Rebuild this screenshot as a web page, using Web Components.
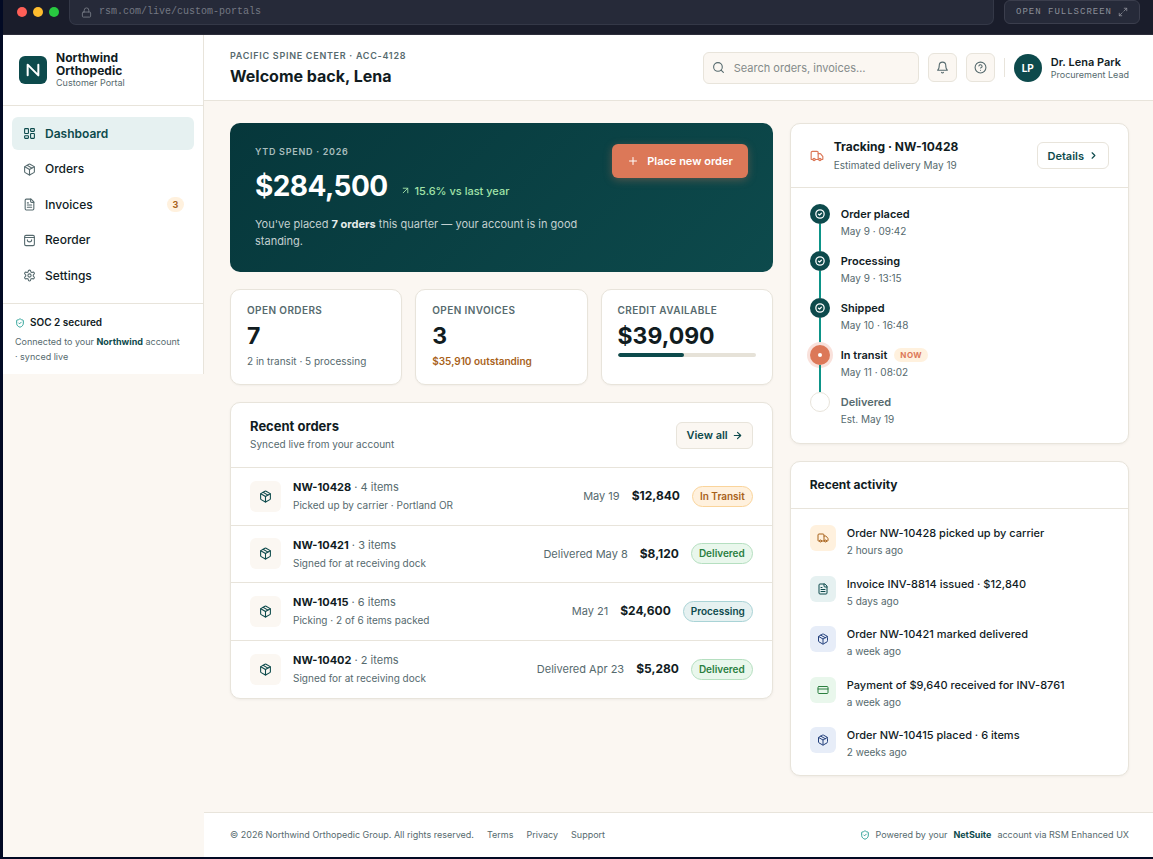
<!DOCTYPE html>
<html lang="en">
<head>
<meta charset="utf-8">
<meta name="viewport" content="width=device-width, initial-scale=1">
<title>Northwind Orthopedic – Customer Portal</title>
<style>
  :root {
    --navy: #020a24; --cream: #fbf7f2; --line: #e8e4db; --ink: #111c1f; --muted: #566a6e;
    --teal: #0d4a4c; --teal-bright: #0d9488; --mint: #e6f1f1; --coral: #dc7858;
    --amber: #a8621b; --amber-bg: #fff1de; --green: #2b7f3f; --green-bg: #e9f7ec;
    --blue: #23407c; --blue-bg: #e7edf8;
  }
  body { margin: 0; background: var(--navy); color: var(--ink); font: 11px/16px Inter, "Liberation Sans", sans-serif; }
</style>
</head>
<body>
<portal-window>
  <browser-bar slot="bar"></browser-bar>
  <side-bar slot="side">
    <nav-item icon="dashboard" active>Dashboard</nav-item>
    <nav-item icon="package">Orders</nav-item>
    <nav-item icon="file" count="3">Invoices</nav-item>
    <nav-item icon="bag">Reorder</nav-item>
    <nav-item icon="gear">Settings</nav-item>
  </side-bar>
  <top-bar slot="top"></top-bar>
  <dashboard-grid>
    <spend-hero slot="left"></spend-hero>
    <stat-row slot="left">
      <stat-card label="Open orders" value="7">2 in transit · 5 processing</stat-card>
      <stat-card label="Open invoices" value="3" warn>$35,910 outstanding</stat-card>
      <stat-card label="Credit available" value="$39,090"><usage-bar value="48"></usage-bar></stat-card>
    </stat-row>
    <panel-card slot="left" heading="Recent orders" sub="Synced live from your account" large>
      <pill-button slot="action" tinted icon="arrow">View all</pill-button>
      <order-list>
        <order-row number="NW-10428" items="4 items" date="May 19" amount="$12,840" status="In Transit" tone="amber">Picked up by carrier · Portland OR</order-row>
        <order-row number="NW-10421" items="3 items" date="Delivered May 8" amount="$8,120" status="Delivered" tone="green">Signed for at receiving dock</order-row>
        <order-row number="NW-10415" items="6 items" date="May 21" amount="$24,600" status="Processing" tone="teal">Picking · 2 of 6 items packed</order-row>
        <order-row number="NW-10402" items="2 items" date="Delivered Apr 23" amount="$5,280" status="Delivered" tone="green">Signed for at receiving dock</order-row>
      </order-list>
    </panel-card>
    <panel-card slot="right" icon="truck" heading="Tracking · NW-10428" sub="Estimated delivery May 19">
      <pill-button slot="action" icon="chevron">Details</pill-button>
      <track-list>
        <track-step state="done" time="May 9 · 09:42">Order placed</track-step>
        <track-step state="done" time="May 9 · 13:15">Processing</track-step>
        <track-step state="done" time="May 10 · 16:48">Shipped</track-step>
        <track-step state="now" time="May 11 · 08:02">In transit</track-step>
        <track-step state="todo" time="Est. May 19">Delivered</track-step>
      </track-list>
    </panel-card>
    <panel-card slot="right" heading="Recent activity" compact>
      <activity-list>
        <activity-item icon="truck" tone="amber" time="2 hours ago">Order NW-10428 picked up by carrier</activity-item>
        <activity-item icon="file" tone="teal" time="5 days ago">Invoice INV-8814 issued · $12,840</activity-item>
        <activity-item icon="package" tone="blue" time="a week ago">Order NW-10421 marked delivered</activity-item>
        <activity-item icon="card" tone="green" time="a week ago">Payment of $9,640 received for INV-8761</activity-item>
        <activity-item icon="package" tone="blue" time="2 weeks ago">Order NW-10415 placed · 6 items</activity-item>
      </activity-list>
    </panel-card>
  </dashboard-grid>
  <site-footer slot="footer"></site-footer>
</portal-window>

<script>
const ICONS = {
  dashboard: '<rect x="3" y="3" width="7" height="9" rx="1"/><rect x="14" y="3" width="7" height="5" rx="1"/><rect x="14" y="12" width="7" height="9" rx="1"/><rect x="3" y="16" width="7" height="5" rx="1"/>',
  package: '<path d="m7.5 4.27 9 5.15"/><path d="M21 8a2 2 0 0 0-1-1.73l-7-4a2 2 0 0 0-2 0l-7 4A2 2 0 0 0 3 8v8a2 2 0 0 0 1 1.73l7 4a2 2 0 0 0 2 0l7-4A2 2 0 0 0 21 16Z"/><path d="m3.3 7 8.7 5 8.7-5"/><path d="M12 22V12"/>',
  file: '<path d="M15 2H6a2 2 0 0 0-2 2v16a2 2 0 0 0 2 2h12a2 2 0 0 0 2-2V7Z"/><path d="M14 2v4a2 2 0 0 0 2 2h4"/><path d="M10 9H8"/><path d="M16 13H8"/><path d="M16 17H8"/>',
  bag: '<rect x="3" y="2.5" width="18" height="19" rx="2.5"/><path d="M3 6.5h18"/><path d="M16 10.5a4 4 0 0 1-8 0"/>',
  gear: '<path d="M12.22 2h-.44a2 2 0 0 0-2 2v.18a2 2 0 0 1-1 1.73l-.43.25a2 2 0 0 1-2 0l-.15-.08a2 2 0 0 0-2.73.73l-.22.38a2 2 0 0 0 .73 2.73l.15.1a2 2 0 0 1 1 1.72v.51a2 2 0 0 1-1 1.74l-.15.09a2 2 0 0 0-.73 2.73l.22.38a2 2 0 0 0 2.73.73l.15-.08a2 2 0 0 1 2 0l.43.25a2 2 0 0 1 1 1.73V20a2 2 0 0 0 2 2h.44a2 2 0 0 0 2-2v-.18a2 2 0 0 1 1-1.73l.43-.25a2 2 0 0 1 2 0l.15.08a2 2 0 0 0 2.73-.73l.22-.39a2 2 0 0 0-.73-2.73l-.15-.08a2 2 0 0 1-1-1.74v-.5a2 2 0 0 1 1-1.74l.15-.09a2 2 0 0 0 .73-2.73l-.22-.38a2 2 0 0 0-2.73-.73l-.15.08a2 2 0 0 1-2 0l-.43-.25a2 2 0 0 1-1-1.73V4a2 2 0 0 0-2-2z"/><circle cx="12" cy="12" r="3"/>',
  shield: '<path d="M20 13c0 5-3.5 7.5-7.66 8.95a1 1 0 0 1-.67-.01C7.5 20.5 4 18 4 13V6a1 1 0 0 1 1-1c2 0 4.5-1.2 6.24-2.72a1.17 1.17 0 0 1 1.52 0C14.51 3.81 17 5 19 5a1 1 0 0 1 1 1z"/><path d="m9 12 2 2 4-4"/>',
  search: '<circle cx="11" cy="11" r="8"/><path d="m21 21-4.3-4.3"/>',
  bell: '<path d="M6 8a6 6 0 0 1 12 0c0 7 3 9 3 9H3s3-2 3-9"/><path d="M10.3 21a1.94 1.94 0 0 0 3.4 0"/>',
  help: '<circle cx="12" cy="12" r="10"/><path d="M9.09 9a3 3 0 0 1 5.83 1c0 2-3 3-3 3"/><path d="M12 17h.01"/>',
  truck: '<path d="M14 18V6a2 2 0 0 0-2-2H4a2 2 0 0 0-2 2v11a1 1 0 0 0 1 1h2"/><path d="M15 18H9"/><path d="M19 18h2a1 1 0 0 0 1-1v-3.65a1 1 0 0 0-.22-.62l-3.48-4.35A1 1 0 0 0 17.52 8H14"/><circle cx="17" cy="18" r="2"/><circle cx="7" cy="18" r="2"/>',
  card: '<rect x="2" y="5" width="20" height="14" rx="2"/><path d="M2 10h20"/>',
  plus: '<path d="M5 12h14M12 5v14"/>',
  arrow: '<path d="M5 12h14M12 5l7 7-7 7"/>',
  up: '<path d="M7 7h10v10M7 17 17 7"/>',
  chevron: '<path d="m9 18 6-6-6-6"/>',
  lock: '<rect x="3" y="11" width="18" height="11" rx="2"/><path d="M7 11V7a5 5 0 0 1 10 0v4"/>',
  expand: '<path d="M15 3h6v6M9 21H3v-6M21 3l-7 7M3 21l7-7"/>',
  check: '<circle cx="12" cy="12" r="10"/><path d="m8.5 12.5 2.5 2 4.5-4.5"/>',
  logo: '<path d="M4 20V4l16 16V4"/>'
};

/* Registers an element whose shadow root is cloned from one template. */
function define(tag, css, markup, setup) {
  const template = document.createElement('template');
  template.innerHTML = `<style>:host{display:block}*{box-sizing:border-box}button,input{font:inherit;color:inherit;margin:0}h1,h2,h3,p,ul{margin:0;padding:0}${css}</style>${markup}`;
  customElements.define(tag, class extends HTMLElement {
    connectedCallback() {
      if (this.shadowRoot) return;
      const content = template.content.cloneNode(true);
      content.querySelectorAll('[data-text]').forEach(n => {
        const value = this.getAttribute(n.dataset.text);
        if (value === null) n.remove(); else n.textContent = value;
      });
      content.querySelectorAll('[data-icon]').forEach(n => {
        const value = this.getAttribute('icon');
        if (value === null) n.remove(); else n.setAttribute('name', value);
      });
      if (setup) setup(this, content);
      this.attachShadow({ mode: 'open' }).append(content);
    }
  });
}

customElements.define('ui-icon', class extends HTMLElement {
  connectedCallback() {
    if (this.shadowRoot) return;
    const size = this.getAttribute('size') || 14;
    const weight = this.getAttribute('weight') || 2;
    this.attachShadow({ mode: 'open' }).innerHTML =
      `<style>:host{display:inline-flex;flex:none}svg{display:block}</style>
       <svg width="${size}" height="${size}" viewBox="0 0 24 24" fill="none" stroke="currentColor" stroke-width="${weight}" stroke-linecap="round" stroke-linejoin="round" aria-hidden="true">${ICONS[this.getAttribute('name')] || ''}</svg>`;
  }
});

const TONES = `
  :host([tone=amber]){--fg:var(--amber);--bg:var(--amber-bg);--edge:#fad49b}
  :host([tone=green]){--fg:var(--green);--bg:var(--green-bg);--edge:#b5dfc0}
  :host([tone=teal]){--fg:var(--teal);--bg:var(--mint);--edge:#a9d3d6}
  :host([tone=blue]){--fg:var(--blue);--bg:var(--blue-bg);--edge:var(--blue-bg)}`;

define('portal-window', `
  :host{display:flex;flex-direction:column;min-height:100vh;box-sizing:border-box;padding:0 0 2px 3px;background:var(--navy)}
  .body{flex:1;display:grid;grid-template-columns:201px minmax(0,1fr);background:var(--cream)}
  .side{align-self:start}
  .page{display:flex;flex-direction:column}
  main{flex:1}`,
  `<slot name="bar"></slot><div class="body"><div class="side"><slot name="side"></slot></div>
   <div class="page"><slot name="top"></slot><main><slot></slot></main><slot name="footer"></slot></div></div>`);

define('browser-bar', `
  :host{background:#1a1d2b;border-bottom:1px solid #2c2d3a;padding:0 13px 9px 14px;color:#747883}
  .row{display:flex;align-items:flex-start;gap:10px}
  .dots{display:flex;gap:6px;padding-top:7px}
  i{width:10px;height:10px;border-radius:50%;background:#ff5f57}
  i:nth-child(2){background:#febc2e} i:nth-child(3){background:#28c840}
  label{flex:1;display:flex;align-items:center;gap:7px;height:25px;padding:0 11px;background:#262a39;border:1px solid #343847;border-top:0;border-radius:0 0 7px 7px}
  input{flex:1;min-width:0;border:0;background:none;padding:0;outline:0;font:10px/14px "Liberation Mono",monospace}
  button{display:flex;align-items:center;gap:6px;height:24px;padding:0 11px;background:#262a39;border:1px solid #3b3e4d;border-radius:6px;font:9px/14px "Liberation Mono",monospace;letter-spacing:1px;color:#8b8e98;text-transform:uppercase}`,
  `<div class="row"><div class="dots"><i></i><i></i><i></i></div>
   <label><ui-icon name="lock" size="11"></ui-icon><input aria-label="Address" readonly value="rsm.com/live/custom-portals"></label>
   <button type="button">Open fullscreen<ui-icon name="expand" size="10"></ui-icon></button></div>`);

define('side-bar', `
  :host{background:#fff;border-right:1px solid var(--line)}
  .brand{display:flex;align-items:center;gap:9px;height:71px;padding:0 16px;border-bottom:1px solid var(--line)}
  .mark{display:grid;place-items:center;width:28px;height:28px;border-radius:6px;background:var(--teal);color:#fff}
  b{display:block;font-size:12px;line-height:13px;font-weight:700}
  .brand span{display:block;font-size:9px;line-height:12px;color:var(--muted)}
  nav{display:flex;flex-direction:column;justify-content:space-between;height:175px;margin:11px 9px 11px}
  .note{border-top:1px solid var(--line);padding:11px 12px 10px;font-size:9px;line-height:15px;color:var(--muted)}
  .note h2{display:flex;align-items:center;gap:5px;font-size:10px;line-height:15px;font-weight:600;color:var(--ink);margin-bottom:4px}
  .note ui-icon{color:var(--teal-bright)} strong{color:var(--teal);font-weight:700}`,
  `<div class="brand"><div class="mark"><ui-icon name="logo" size="16" weight="3"></ui-icon></div><div><b>Northwind<br>Orthopedic</b><span>Customer Portal</span></div></div>
   <nav aria-label="Main"><slot></slot></nav>
   <div class="note"><h2><ui-icon name="shield" size="10"></ui-icon>SOC 2 secured</h2><p>Connected to your <strong>Northwind</strong> account<br>· synced live</p></div>`);

define('nav-item', `
  a{display:flex;align-items:center;gap:9px;height:33px;padding:0 10px 0 11px;border-radius:6px;font-size:12px;font-weight:500;color:var(--ink);text-decoration:none}
  ui-icon{color:var(--muted)}
  :host([active]) a{background:var(--mint);color:var(--teal);font-weight:600}
  :host([active]) ui-icon{color:var(--teal)}
  em{margin-left:auto;min-width:17px;box-sizing:border-box;padding:0 5px;border-radius:8px;background:var(--amber-bg);color:var(--amber);font:700 9px/15px Inter,sans-serif;text-align:center}`,
  `<a href="#"><ui-icon data-icon size="13"></ui-icon><slot></slot><em data-text="count"></em></a>`);

define('top-bar', `
  :host{background:#fff;border-bottom:1px solid var(--line)}
  header{display:flex;align-items:center;justify-content:space-between;height:65px;padding:0 24px 0 26px}
  .eyebrow{font-size:9px;line-height:14px;font-weight:600;letter-spacing:.08em;color:var(--muted);text-transform:uppercase}
  h1{font-size:16px;line-height:22px;font-weight:700;margin-top:2px}
  .tools{display:flex;align-items:center;gap:9px}
  label{display:flex;align-items:center;gap:9px;width:216px;height:32px;padding:0 8px;background:var(--cream);border:1px solid var(--line);border-radius:6px;color:var(--muted)}
  input{flex:1;min-width:0;border:0;background:none;outline:0;padding:0;font-size:11px}
  input::placeholder{color:#858b8a;opacity:1}
  button{display:grid;place-items:center;width:29px;height:29px;padding:0;background:var(--cream);border:1px solid var(--line);border-radius:6px;color:var(--muted)}
  hr{width:1px;height:19px;margin:0;border:0;background:var(--line)}
  .avatar{display:grid;place-items:center;width:28px;height:28px;border-radius:50%;background:var(--teal);color:#fff;font-size:10px;font-weight:700}
  .who b{display:block;font-size:11px;line-height:14px;font-weight:600}
  .who span{display:block;font-size:9px;line-height:12px;color:var(--muted)}`,
  `<header><div><p class="eyebrow">Pacific Spine Center · ACC-4128</p><h1>Welcome back, Lena</h1></div>
   <div class="tools"><label><ui-icon name="search" size="13"></ui-icon><input type="search" aria-label="Search" placeholder="Search orders, invoices…"></label>
   <button type="button" aria-label="Notifications"><ui-icon name="bell" size="13"></ui-icon></button>
   <button type="button" aria-label="Help"><ui-icon name="help" size="13"></ui-icon></button>
   <hr><div class="avatar">LP</div><div class="who"><b>Dr. Lena Park</b><span>Procurement Lead</span></div></div></header>`);

define('dashboard-grid', `
  :host{display:grid;grid-template-columns:minmax(0,8fr) minmax(0,5fr);gap:17px;align-items:start;padding:22px 24px 36px 26px}
  div{display:flex;flex-direction:column;gap:17px}`,
  `<div><slot name="left"></slot></div><div><slot name="right"></slot></div>`);

define('spend-hero', `
  section{display:flex;align-items:flex-start;justify-content:space-between;gap:12px;padding:21px 25px 22px;border-radius:10px;background:linear-gradient(135deg,#06373b,#0d4a4c);color:#fff}
  .text{max-width:345px}
  .eyebrow{font-size:9px;line-height:15px;font-weight:600;letter-spacing:.08em;color:#a9bdbd;text-transform:uppercase}
  .sum{display:flex;align-items:baseline;gap:12px;margin-top:9px}
  .sum b{font-size:28px;line-height:36px;font-weight:700;letter-spacing:-.02em}
  .trend{display:flex;align-items:center;gap:4px;font-weight:500;color:#a1e3a8}
  .desc{margin-top:12px;line-height:17px;color:#c3d0d0} strong{font-weight:700;color:#e5ecec}
  button{display:flex;align-items:center;gap:8px;height:34px;padding:0 15px;border:0;border-radius:6px;background:var(--coral);box-shadow:0 2px 8px #dc785859;color:#fff;font-size:11px;font-weight:600;white-space:nowrap}`,
  `<section><div class="text"><p class="eyebrow">YTD spend · 2026</p><div class="sum"><b>$284,500</b><span class="trend"><ui-icon name="up" size="11"></ui-icon>15.6% vs last year</span></div>
   <p class="desc">You've placed <strong>7 orders</strong> this quarter — your account is in good standing.</p></div>
   <button type="button"><ui-icon name="plus" size="12"></ui-icon>Place new order</button></section>`);

define('stat-row', `:host{display:grid;grid-template-columns:repeat(3,minmax(0,1fr));gap:13px}`, `<slot></slot>`);

define('stat-card', `
  :host{box-sizing:border-box;height:96px;padding:12px 16px;background:#fff;border:1px solid var(--line);border-radius:10px;box-shadow:0 1px 2px #0000000a}
  h3{font-size:10px;line-height:16px;font-weight:600;letter-spacing:.04em;color:var(--muted);text-transform:uppercase}
  b{display:block;font-size:23px;line-height:28px;font-weight:700;margin:4px 0 3px}
  .sub{font-size:10px;line-height:16px;color:var(--muted)}
  :host([warn]) .sub{color:var(--amber);font-weight:600}`,
  `<h3 data-text="label"></h3><b data-text="value"></b><div class="sub"><slot></slot></div>`);

define('usage-bar', `
  div{height:4px;border-radius:2px;background:#e6e2d8;overflow:hidden}
  i{display:block;height:100%;background:var(--teal);border-radius:2px}`,
  `<div role="img" aria-label="Credit used"><i></i></div>`,
  (el, root) => { root.querySelector('i').style.width = el.getAttribute('value') + '%'; });

define('panel-card', `
  :host{background:#fff;border:1px solid var(--line);border-radius:10px;box-shadow:0 1px 3px #0000000d}
  header{display:flex;align-items:center;gap:10px;height:64px;padding:0 19px;border-bottom:1px solid var(--line);box-sizing:border-box}
  :host([compact]) header{height:47px}
  :host([large]) header{height:65px}
  header>ui-icon{color:var(--coral)}
  .titles{flex:1}
  h2{font-size:12px;line-height:16px;font-weight:700}
  :host([large]) h2{font-size:13px}
  p{font-size:10px;line-height:15px;margin-top:3px;color:var(--muted)}`,
  `<header><ui-icon data-icon size="14"></ui-icon><div class="titles"><h2 data-text="heading"></h2><p data-text="sub"></p></div><slot name="action"></slot></header><slot></slot>`);

define('pill-button', `
  button{display:flex;align-items:center;gap:4px;height:27px;padding:0 9px;border:1px solid var(--line);border-radius:6px;background:#fff;color:var(--teal);font-size:11px;font-weight:600}
  :host([tinted]) button{background:var(--cream)}`,
  `<button type="button"><slot></slot><ui-icon data-icon size="11" weight="2.5"></ui-icon></button>`);

define('order-list', `:host{display:grid;grid-auto-rows:1fr;height:230px}`, `<slot></slot>`);

define('order-row', TONES + `
  :host{display:flex;align-items:center;gap:12px;padding:0 19px;border-bottom:1px solid var(--line)}
  :host(:last-child){border-bottom:0}
  .box{display:grid;place-items:center;width:31px;height:31px;border-radius:6px;background:var(--cream);color:var(--teal)}
  .info{flex:1;color:var(--muted)}
  .info p{line-height:16px} .info b{font-weight:700;color:var(--ink)}
  .info .sub{font-size:10px;margin-top:2px}
  .date{color:var(--muted)}
  .sum{font-size:12px;font-weight:700}
  .status{padding:0 7px;border:1px solid var(--edge);border-radius:11px;background:var(--bg);color:var(--fg);font-size:10px;line-height:19px;font-weight:600}`,
  `<div class="box"><ui-icon name="package" size="13"></ui-icon></div>
   <div class="info"><p><b data-text="number"></b> · <span data-text="items"></span></p><p class="sub"><slot></slot></p></div>
   <span class="date" data-text="date"></span><span class="sum" data-text="amount"></span><span class="status" data-text="status"></span>`);

define('track-list', `:host{display:grid;grid-auto-rows:47px;padding:16px 19px 4px}`, `<slot></slot>`);

define('track-step', `
  :host{display:flex;gap:11px}
  .rail{display:flex;flex-direction:column;align-items:center;width:20px}
  .dot{flex:none;display:grid;place-items:center;width:20px;height:20px;border-radius:50%;background:var(--teal);color:#fff}
  .line{flex:1;width:2px;background:var(--teal-bright)}
  :host([state=now]) .dot{background:var(--coral);box-shadow:0 0 0 3px #f9e1db}
  :host([state=now]) .dot::after{content:"";width:4px;height:4px;border-radius:50%;background:#fff}
  :host([state=todo]) .dot{background:#fff;border:1px solid var(--line)}
  :host(:not([state=done])) ui-icon,:host([state=todo]) .line{display:none}
  h3{display:flex;align-items:center;gap:7px;font-size:11px;line-height:20px;font-weight:600}
  :host([state=todo]) h3{color:var(--muted)}
  p{font-size:10px;line-height:15px;color:var(--muted)}
  .tag{padding:0 6px;border-radius:7px;background:var(--amber-bg);color:var(--coral);font-size:8px;line-height:14px;font-weight:700;letter-spacing:.06em}`,
  `<div class="rail"><div class="dot"><ui-icon name="check" size="10" weight="3"></ui-icon></div><div class="line"></div></div>
   <div><h3><slot></slot></h3><p data-text="time"></p></div>`,
  (el, root) => {
    if (el.getAttribute('state') !== 'now') return;
    const tag = document.createElement('span');
    tag.className = 'tag'; tag.textContent = 'NOW';
    root.querySelector('h3').append(tag);
  });

define('activity-list', `:host{display:flex;flex-direction:column;justify-content:space-between;height:235px;padding:16px 19px 15px}`, `<slot></slot>`);

define('activity-item', TONES + `
  :host{display:flex;align-items:flex-start;gap:11px}
  .box{display:grid;place-items:center;width:26px;height:26px;border-radius:6px;background:var(--bg);color:var(--fg)}
  h3{font-size:11px;line-height:16px;font-weight:500}
  p{font-size:10px;line-height:15px;margin-top:2px;color:var(--muted)}`,
  `<div class="box"><ui-icon data-icon size="12"></ui-icon></div><div><h3><slot></slot></h3><p data-text="time"></p></div>`);

define('site-footer', `
  :host{background:#fff;border-top:1px solid var(--line)}
  footer{display:flex;align-items:center;justify-content:space-between;height:44px;padding:0 24px 0 26px;font-size:9px;color:var(--muted)}
  div{display:flex;align-items:center;gap:13px} .by{gap:6px}
  a{color:inherit;text-decoration:none} ui-icon{color:var(--teal-bright)} strong{color:var(--teal);font-weight:700}`,
  `<footer><div><span>© 2026 Northwind Orthopedic Group. All rights reserved.</span><a href="#">Terms</a><a href="#">Privacy</a><a href="#">Support</a></div>
   <div class="by"><ui-icon name="shield" size="10"></ui-icon><span>Powered by your</span><strong>NetSuite</strong><span>account via RSM Enhanced UX</span></div></footer>`);
</script>
</body>
</html>
